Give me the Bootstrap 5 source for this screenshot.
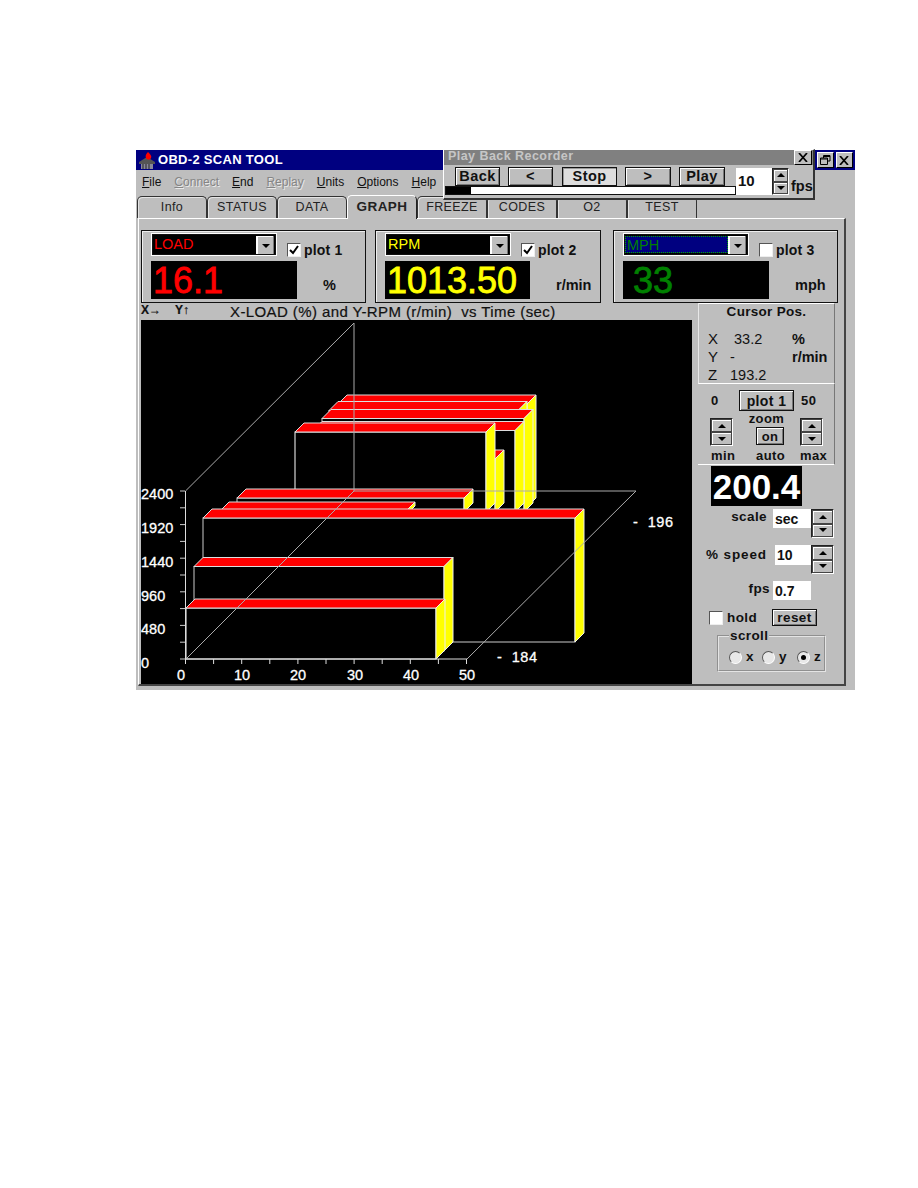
<!DOCTYPE html>
<html lang="en">
<head>
    <meta charset="UTF-8">
    <meta name="viewport" content="width=device-width, initial-scale=1.0">
    <title>OBD-2 Scan Tool</title>
    <link rel="stylesheet" href="https://cdn.jsdelivr.net/npm/bootstrap@5.3.0/dist/css/bootstrap.min.css">
    <style>
        body { background: #fff; font-family: "Liberation Sans", Arial, sans-serif; color: #111; }
        .sheet { padding: 150px 0 0 136px; }
        .scan-window { position: relative; width: 719px; height: 540px; background: #bebebe; }

        /* title and menu */
        .titlebar { height: 20px; background: #000080; color: #fff; font-weight: 700; font-size: 13px; letter-spacing: .3px; padding-left: 2px; padding-right: 2px; }
        .titlebar svg { margin-right: 1px; }
        .cap-group { gap: 2px; }
        .cap-btn { width: 17px; height: 16px; background: #bebebe; border: 1px solid #000; border-top-color: #fff; border-left-color: #fff; padding: 0; display: flex; align-items: center; justify-content: center; }
        .menubar { height: 25px; font-size: 12px; padding-left: 6px; padding-top: 3px; }
        .menubar span { margin-right: 13px; }
        .menubar .off { color: #858585; text-shadow: 1px 1px 0 #e8e8e8; }

        /* tabs */
        .tabstrip { height: 23px; margin-left: 1px; flex-wrap: nowrap; }
        .wintab { width: 70px; height: 22px; margin-top: 1px; border: 1px solid #333; border-bottom: 0; border-radius: 5px 5px 0 0; box-shadow: inset 1px 1px 0 #e4e4e4; text-align: center; font-size: 12.5px; letter-spacing: .4px; line-height: 21px; color: #222; }
        .wintab.on { height: 24px; margin-top: 0; border-color: #fff #222 #bebebe #fff; font-weight: 700; font-size: 13.5px; position: relative; z-index: 2; box-shadow: none; background: #bebebe; }

        /* page of the tab */
        .tabpage { width: 708px; height: 468px; margin-left: 2px; padding: 11px 0 0 2px; border-top: 1px solid #fff; border-left: 1px solid #fff; border-right: 2px solid #444; border-bottom: 2px solid #444; }
        .probe { height: 73px; border: 1px solid #111; box-shadow: inset 1px 1px 0 #eee; padding: 2px 0 0 9px; flex: none; }
        .probe-a { width: 225px; margin-right: 9px; }
        .probe-b { width: 226px; margin-right: 12px; }
        .probe-c { width: 225px; }
        .combo { width: 126px; height: 23px; background: #000; border: 1px solid #fff; outline: 1px solid #111; outline-offset: -2px; padding: 2px 2px 2px 1px; font-size: 14.5px; line-height: 17px; }
        .combo-txt { flex: 1; height: 100%; padding-left: 1px; }
        .combo-sel { background: #000080; border: 1px dotted #0a0; }
        .combo-arrow { width: 18px; height: 19px; background: #bebebe; border-left: 1px solid #fff; box-shadow: inset -1px -1px 0 #777, inset 1px 1px 0 #fff; display: flex; align-items: center; justify-content: center; }
        .tri-d { width: 0; height: 0; border-left: 4px solid transparent; border-right: 4px solid transparent; border-top: 4px solid #000; }
        .tri-u { width: 0; height: 0; border-left: 4px solid transparent; border-right: 4px solid transparent; border-bottom: 4px solid #000; }
        .tick-box { width: 14px; height: 14px; background: #fff; border: 1px solid #555; border-right-color: #eee; border-bottom-color: #eee; display: inline-flex; align-items: center; justify-content: center; flex: none; }
        .bold-lbl { font-weight: 700; font-size: 14px; letter-spacing: .2px; }
        .plot-chk { margin-left: 10px; margin-top: 9px; gap: 3px; height: 16px; }
        .readout { width: 146px; height: 38px; margin-top: 3px; background: #000; font-size: 36px; line-height: 39px; padding-left: 2px; flex: none; -webkit-text-stroke: .8px currentColor; }
        .readout-b { width: 145px; }
        .readout-c { padding-left: 10px; }
        .unit { font-weight: 700; font-size: 14.5px; margin: 17px 0 0 26px; }
        .c-load { color: #f00; } .c-rpm { color: #ff0; } .c-mph { color: #008000; }

        /* heading over the plot */
        .plot-col { width: 551px; flex: none; margin-right: 6px; }
        .plot-head { height: 17px; font-size: 15px; letter-spacing: .4px; line-height: 17px; white-space: pre; -webkit-text-stroke: .2px #111; }
        .axis-tag { width: 89px; font-size: 12px; font-weight: 700; line-height: 12px; padding-top: 1px; flex: none; letter-spacing: 0; }
        .axis-tag span { display: inline-block; width: 34px; }
        .plot-svg { display: block; background: #000; width: 551px; height: 364px; }
        .plot-svg text { fill: #fff; stroke: #fff; stroke-width: .3px; font-size: 14.5px; font-family: "Liberation Sans", Arial, sans-serif; white-space: pre; }
        .plot-svg .depth-lbl { letter-spacing: .6px; }

        /* right column */
        .side { width: 137px; flex: none; }
        .sect-a { height: 81px; border-top: 1px solid #fff; border-bottom: 1px solid #fff; border-left: 1px solid #e8e8e8; border-right: 1px solid #777; font-size: 14.5px; }
        .sect-title { height: 18px; margin-bottom: 8px; text-align: center; font-weight: 700; font-size: 13.5px; letter-spacing: .3px; line-height: 16px; }
        .cur-row { height: 18px; line-height: 18px; padding-left: 9px; }
        .cur-row b { font-size: 14.5px; }
        .cur-k { width: 22px; font-size: 15px; }
        .cur-v { width: 62px; }
        .sect-b { height: 81px; border-bottom: 1px solid #fff; border-right: 1px solid #777; font-weight: 700; font-size: 13px; letter-spacing: .4px; }
        .zoom-top { padding: 6px 0 0 13px; height: 27px; }
        .zoom-top .z-min { width: 28px; }
        .zoom-mid { padding-left: 12px; height: 34px; margin-top: 1px; }
        .zoom-mid .spinner { margin-top: 6px; height: 28px; }
        .zoom-c { width: 67px; text-align: center; line-height: 14px; }
        .zoom-low { height: 17px; padding: 3px 0 0 13px; line-height: 14px; }
        .zoom-low span:nth-child(1) { width: 45px; }
        .zoom-low span:nth-child(2) { width: 44px; }
        .winbtn { background: #bebebe; border: 1px solid #111; box-shadow: inset 1px 1px 0 #fff, inset -1px -1px 0 #777; border-radius: 0; padding: 0; font-weight: 700; font-size: 14px; letter-spacing: .4px; line-height: 1; color: #111; display: flex; align-items: center; justify-content: center; flex: none; }
        .btn-plot { width: 55px; height: 21px; margin-right: 7px; }
        .btn-on { width: 28px; height: 18px; margin: 1px 0 0 23px; font-size: 13px; }
        .btn-reset { width: 45px; height: 17px; margin-left: 2px; font-size: 13.5px; }

        .spinner { width: 23px; height: 29px; border: 1px solid #222; border-right-color: #fff; border-bottom-color: #fff; flex: none; }
        .spinner i { flex: 1; display: flex; align-items: center; justify-content: center; border: 1px solid #444; background: #bebebe; box-shadow: inset 1px 1px 0 #fff; }
        .spinner-s { width: 17px; height: 27px; margin-top: 3px; }
        .big-val { width: 91px; height: 40px; margin: 1px 0 3px 13px; background: #000; color: #fff; font-weight: 700; font-size: 35px; line-height: 41px; text-align: center; }
        .set-row { font-weight: 700; font-size: 13.5px; letter-spacing: .4px; }
        .set-lbl { text-align: right; flex: none; line-height: 16px; }
        .lbl-wide { letter-spacing: .9px; padding-top: 2px; }
        .field { background: #fff; font-size: 14px; font-weight: 700; letter-spacing: 0; height: 19px; line-height: 20px; padding-left: 2px; flex: none; }
        .hold-row { height: 17px; line-height: 17px; margin: 9px 0 0 11px; }
        .scroll-box { width: 109px; height: 43px; margin: 3px 0 0 19px; padding: 0 0 0 10px; border: 2px groove #e4e4e4; font-weight: 700; font-size: 13.5px; letter-spacing: .4px; }
        .scroll-box legend { float: none; width: auto; margin: 0; padding: 0 1px; font-size: 13.5px; line-height: 13px; font-weight: 700; }
        .radio-row { margin-top: 8px; line-height: 14px; }
        .radio-dot { width: 13px; height: 13px; border-radius: 50%; background: #e8e8e8; border: 1px solid #555; border-right-color: #fff; border-bottom-color: #fff; display: inline-flex; align-items: center; justify-content: center; flex: none; }
        .radio-dot i { width: 5px; height: 5px; border-radius: 50%; background: #000; }

        /* floating recorder */
        .recorder { position: absolute; left: 307px; top: -1px; width: 372px; height: 51px; background: #bebebe; border: 1px solid #fff; border-right: 2px solid #333; border-bottom: 2px solid #333; z-index: 5; padding-left: 1px; }
        .rec-title { height: 15px; margin-left: -1px; background: #808080; color: #c6c6c6; font-weight: 700; font-size: 12.5px; letter-spacing: .45px; padding-left: 4px; line-height: 12px; }
        .rec-title span { margin-top: -3px; }
        .rec-title .cap-btn { height: 15px; width: 18px; margin-right: 1px; }
        .rec-left { width: 291px; flex: none; }
        .rec-btns { padding: 2px 0 0 10px; height: 21px; gap: 8px; }
        .rec-btns .winbtn { height: 19px; font-size: 14.5px; }
        .stop-lit { background: #dedede; box-shadow: inset 1px 1px 0 #999; }
        .progress-track { height: 9px; width: 291px; background: #fff; border: 1px solid #111; }
        .progress-fill { background: #000; width: 25px; height: 100%; }
        .rec-field { width: 36px; height: 27px; margin: 3px 0 0 0; background: #fff; font-weight: 700; font-size: 15px; padding-left: 2px; line-height: 25px; flex: none; }
        .rec-fps { font-weight: 700; font-size: 14.5px; margin-top: 11px; margin-left: 2px; }
    </style>
</head>
<body>
<div class="sheet">
    <div class="scan-window">

        <!-- Title bar -->
        <div class="titlebar d-flex align-items-center">
            <svg width="19" height="17" viewBox="0 0 19 17">
                <path d="M1 10 L9 5 L17 10 L17 12 L1 12 Z" fill="#555"/>
                <path d="M3 12 H15 V17 H3 Z" fill="#889"/>
                <path d="M5 12 V17 M8 12 V17 M11 12 V17" stroke="#222" stroke-width="1"/>
                <path d="M10 0 C8 2 7 4 8 6 C9 8 12 8 13 6 C14 4 12 2 10 0 Z" fill="#f00"/>
            </svg>
            <span>OBD-2 SCAN TOOL</span>
            <div class="ms-auto d-flex cap-group">
                <div class="cap-btn">
                    <svg width="11" height="10" viewBox="0 0 11 10"><path d="M3.5 .5 H10 V6 H8 M.5 3 H7.5 V9.5 H.5 Z M.5 4 H7.5 M3.5 .5 V3 M3.5 1.5 H10" fill="none" stroke="#000"/></svg>
                </div>
                <div class="cap-btn">
                    <svg width="10" height="9" viewBox="0 0 10 9"><path d="M1 0 L9 9 M9 0 L1 9" stroke="#000" stroke-width="1.7"/></svg>
                </div>
            </div>
        </div>

        <!-- Floating Play Back Recorder -->
        <div class="recorder">
            <div class="rec-title d-flex align-items-center justify-content-between">
                <span>Play Back Recorder</span>
                <div class="cap-btn"><svg width="10" height="9" viewBox="0 0 10 9"><path d="M1 0 L9 9 M9 0 L1 9" stroke="#000" stroke-width="1.7"/></svg></div>
            </div>
            <div class="d-flex">
                <div class="rec-left">
                    <div class="rec-btns d-flex">
                        <button class="winbtn" style="width:45px">Back</button>
                        <button class="winbtn" style="width:45px">&lt;</button>
                        <button class="winbtn stop-lit" style="width:55px;margin-left:1px">Stop</button>
                        <button class="winbtn" style="width:46px">&gt;</button>
                        <button class="winbtn" style="width:46px">Play</button>
                    </div>
                    <div class="progress-track"><div class="progress-fill"></div></div>
                </div>
                <div class="rec-field">10</div>
                <div class="spinner spinner-s d-flex flex-column">
                    <i><span class="tri-u"></span></i>
                    <i><span class="tri-d"></span></i>
                </div>
                <div class="rec-fps">fps</div>
            </div>
        </div>

        <!-- Menu -->
        <div class="menubar d-flex">
            <span><u>F</u>ile</span>
            <span class="off"><u>C</u>onnect</span>
            <span><u>E</u>nd</span>
            <span class="off"><u>R</u>eplay</span>
            <span><u>U</u>nits</span>
            <span><u>O</u>ptions</span>
            <span><u>H</u>elp</span>
        </div>

        <!-- Tabs -->
        <ul class="nav tabstrip">
            <li class="wintab">Info</li>
            <li class="wintab">STATUS</li>
            <li class="wintab">DATA</li>
            <li class="wintab on">GRAPH</li>
            <li class="wintab">FREEZE</li>
            <li class="wintab">CODES</li>
            <li class="wintab">O2</li>
            <li class="wintab">TEST</li>
        </ul>

        <div class="tabpage">
            <!-- Three probes -->
            <div class="d-flex">
                <div class="probe probe-a">
                    <div class="d-flex">
                        <div class="combo d-flex c-load"><div class="combo-txt">LOAD</div><div class="combo-arrow"><span class="tri-d"></span></div></div>
                        <div class="plot-chk d-flex align-items-center bold-lbl"><span class="tick-box"><svg width="10" height="10" viewBox="0 0 10 10"><path d="M1 5 L4 8 L9 1" fill="none" stroke="#000" stroke-width="2"/></svg></span>plot 1</div>
                    </div>
                    <div class="d-flex">
                        <div class="readout c-load">16.1</div>
                        <div class="unit">%</div>
                    </div>
                </div>
                <div class="probe probe-b">
                    <div class="d-flex">
                        <div class="combo d-flex c-rpm"><div class="combo-txt">RPM</div><div class="combo-arrow"><span class="tri-d"></span></div></div>
                        <div class="plot-chk d-flex align-items-center bold-lbl"><span class="tick-box"><svg width="10" height="10" viewBox="0 0 10 10"><path d="M1 5 L4 8 L9 1" fill="none" stroke="#000" stroke-width="2"/></svg></span>plot 2</div>
                    </div>
                    <div class="d-flex">
                        <div class="readout readout-b c-rpm">1013.50</div>
                        <div class="unit">r/min</div>
                    </div>
                </div>
                <div class="probe probe-c">
                    <div class="d-flex">
                        <div class="combo d-flex c-mph"><div class="combo-txt combo-sel">MPH</div><div class="combo-arrow"><span class="tri-d"></span></div></div>
                        <div class="plot-chk d-flex align-items-center bold-lbl"><span class="tick-box"></span>plot 3</div>
                    </div>
                    <div class="d-flex">
                        <div class="readout readout-c c-mph">33</div>
                        <div class="unit">mph</div>
                    </div>
                </div>
            </div>

            <div class="d-flex">
                <!-- Plot -->
                <div class="plot-col">
                    <div class="plot-head d-flex">
                        <div class="axis-tag"><span>X&#8594;</span><span>Y&#8593;</span></div>
                        <div>X-LOAD (%) and Y-RPM (r/min)  vs Time (sec)</div>
                    </div>
                    <svg class="plot-svg" id="plot" viewBox="141 320 551 364"></svg>
                </div>

                <!-- Right column -->
                <div class="side">
                    <div class="sect-a">
                        <div class="sect-title">Cursor Pos.</div>
                        <div class="cur-row d-flex"><span class="cur-k">X</span><span class="cur-v ps-1">33.2</span><b>%</b></div>
                        <div class="cur-row d-flex"><span class="cur-k">Y</span><span class="cur-v">-</span><b>r/min</b></div>
                        <div class="cur-row d-flex"><span class="cur-k">Z</span><span class="cur-v">193.2</span></div>
                    </div>
                    <div class="sect-b">
                        <div class="zoom-top d-flex align-items-center">
                            <span class="z-min">0</span>
                            <button class="winbtn btn-plot">plot 1</button>
                            <span>50</span>
                        </div>
                        <div class="zoom-mid d-flex">
                            <div class="spinner d-flex flex-column"><i><span class="tri-u"></span></i><i><span class="tri-d"></span></i></div>
                            <div class="zoom-c">zoom<button class="winbtn btn-on">on</button></div>
                            <div class="spinner d-flex flex-column"><i><span class="tri-u"></span></i><i><span class="tri-d"></span></i></div>
                        </div>
                        <div class="zoom-low d-flex"><span>min</span><span>auto</span><span>max</span></div>
                    </div>

                    <div class="big-val">200.4</div>

                    <div class="set-row d-flex">
                        <div class="set-lbl" style="width:69px">scale</div>
                        <div class="field" style="width:38px;margin-left:6px">sec</div>
                        <div class="spinner d-flex flex-column"><i><span class="tri-u"></span></i><i><span class="tri-d"></span></i></div>
                    </div>
                    <div class="set-row d-flex" style="margin-top:7px">
                        <div class="set-lbl lbl-wide" style="width:69px">% speed</div>
                        <div class="field" style="width:36px;margin-left:8px;height:20px">10</div>
                        <div class="spinner d-flex flex-column"><i><span class="tri-u"></span></i><i><span class="tri-d"></span></i></div>
                    </div>
                    <div class="set-row d-flex" style="margin-top:7px">
                        <div class="set-lbl" style="width:72px">fps</div>
                        <div class="field" style="width:38px;margin-left:3px">0.7</div>
                    </div>
                    <div class="set-row hold-row d-flex align-items-center">
                        <span class="tick-box"></span>
                        <span class="ms-1" style="width:43px">hold</span>
                        <button class="winbtn btn-reset">reset</button>
                    </div>
                    <fieldset class="scroll-box">
                        <legend>scroll</legend>
                        <div class="radio-row d-flex align-items-center">
                            <span class="radio-dot"></span><span class="ms-1" style="width:16px">x</span>
                            <span class="radio-dot"></span><span class="ms-1" style="width:18px">y</span>
                            <span class="radio-dot"><i></i></span><span class="ms-1">z</span>
                        </div>
                    </fieldset>
                </div>
            </div>
        </div>
    </div>
</div>

<script>
    // x0,x1 = front face left/right, top,bot = front face top/bottom, edge = outline colour
    const bars = [
        [338, 527, 404, 507, '#ccc'],
        [329, 518, 410.5, 507, '#ccc'],
        [322, 524, 418.5, 512, '#ccc'],
        [313, 515, 430.5, 512, '#ccc'],
        [370, 495, 459, 512, '#ccc'],
        [295, 486, 432, 512, '#fff'],
        [237, 464, 498, 512, '#ccc'],
        [220, 406, 511, 515, '#ccc'],
        [203, 575, 518, 642, '#ccc'],
        [194, 444, 566.5, 651, '#ccc'],
        [186, 436, 608, 659, '#fff']
    ];
    const d = 9;
    let out = '';
    bars.forEach(b => {
        let [x0, x1, top, bot, edge] = b;
        out += `<rect x="${x0}" y="${top}" width="${x1 - x0}" height="${bot - top}" fill="#000" stroke="${edge}"/>`;
        out += `<polygon points="${x0},${top} ${x0 + d},${top - d} ${x1 + d},${top - d} ${x1},${top}" fill="#f00" stroke="#ddd"/>`;
        out += `<polygon points="${x1},${top} ${x1 + d},${top - d} ${x1 + d},${bot - d} ${x1},${bot}" fill="#ff0" stroke="#eee"/>`;
    });
    // frame of the 3d box goes over the bars
    out += '<path d="M185.5 491 L354 323 V491 H636 L467 659 M354 491 L186 659" fill="none" stroke="#aaa"/>';
    out += '<path d="M185.5 491 V659 H467" fill="none" stroke="#ddd"/>';
    for (let i = 0; i <= 10; i++) {
        const x = 185.5 + 28.1 * i;
        out += `<line x1="${x}" y1="659" x2="${x}" y2="664" stroke="#ddd"/>`;
        const y = 491 + 16.8 * i;
        out += `<line x1="180" y1="${y}" x2="185" y2="${y}" stroke="#ccc"/>`;
    }
    [['2400', 499], ['1920', 533], ['1440', 567], ['960', 601], ['480', 634], ['0', 668]].forEach(t => {
        out += `<text x="141" y="${t[1]}">${t[0]}</text>`;
    });
    [['0', 177], ['10', 234], ['20', 290], ['30', 347], ['40', 403], ['50', 459]].forEach(t => {
        out += `<text x="${t[1]}" y="680">${t[0]}</text>`;
    });
    out += '<text class="depth-lbl" x="633" y="527">-  196</text><text class="depth-lbl" x="497" y="662">-  184</text>';
    document.getElementById('plot').innerHTML = out;
</script>
<script src="https://cdn.jsdelivr.net/npm/bootstrap@5.3.0/dist/js/bootstrap.bundle.min.js"></script>
</body>
</html>
